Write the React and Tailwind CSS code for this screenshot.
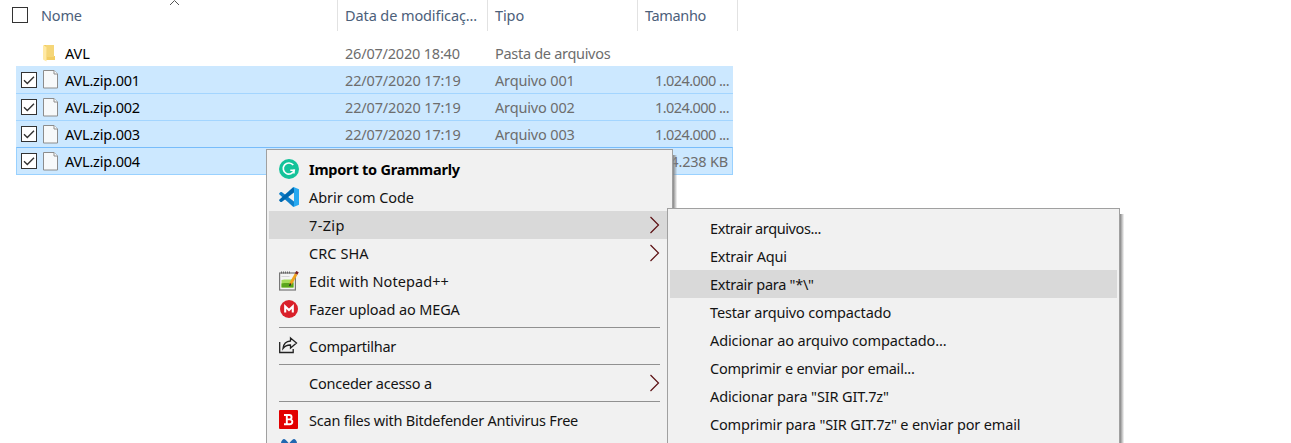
import React from "react";

const FILES = [
  ["AVL.zip.001", "22/07/2020 17:19", "Arquivo 001", "1.024.000 ..."],
  ["AVL.zip.002", "22/07/2020 17:19", "Arquivo 002", "1.024.000 ..."],
  ["AVL.zip.003", "22/07/2020 17:19", "Arquivo 003", "1.024.000 ..."],
  ["AVL.zip.004", "", "", "4.238 KB"],
];

const SUBMENU = [
  ["Extrair arquivos...", "tracking-[-0.4px]"],
  ["Extrair Aqui", "tracking-[-0.2px]"],
  ['Extrair para "*\\"', "tracking-[-0.26px]"],
  ["Testar arquivo compactado", "tracking-[-0.16px]"],
  ["Adicionar ao arquivo compactado...", "tracking-[-0.11px]"],
  ["Comprimir e enviar por email...", "tracking-[-0.23px]"],
  ['Adicionar para "SIR GIT.7z"', "tracking-[-0.12px]"],
  ['Comprimir para "SIR GIT.7z" e enviar por email', "tracking-[-0.16px]"],
];

function Checkbox({ checked }) {
  return (
    <svg className="block size-4 shrink-0" viewBox="0 0 16 16" fill="none">
      <rect x="0.5" y="0.5" width="15" height="15" fill="#fff" stroke="#333" />
      {checked && <path d="M3 8.2 6.3 11.4 13 4.8" stroke="#333" strokeWidth="1.4" />}
    </svg>
  );
}

function PageIcon() {
  return (
    <svg className="block h-[19px] w-[15px] shrink-0" viewBox="0 0 15 19">
      <path d="M.5.5h10.500l3.500 3.500v14H.5z" fill="#f7f9fa" stroke="#8c8c8c" />
      <path d="M11 .5v3.500h3.500" fill="#fff" stroke="#8c8c8c" />
    </svg>
  );
}

function FolderIcon() {
  return (
    <svg className="block h-[18px] w-[15px] shrink-0" viewBox="0 0 15 18">
      <path d="M1 1h10v11h1v4H3z" fill="#f3cd62" />
      <path d="M3 1h8v12H4z" fill="#f5d678" />
      <path d="M0 1l3.500 2v14.500L0 15.500z" fill="#ffe9a4" />
    </svg>
  );
}

function GrammarlyIcon() {
  return (
    <svg className="block size-5" viewBox="0 0 20 20" fill="none">
      <circle cx="10" cy="10" r="10" fill="#15c39a" />
      <path d="M14.300 6.100A5.600 5.600 0 1 0 15.200 11.300H11.300" stroke="#fff" strokeWidth="1.600" />
      <path d="M15 10.600v4" stroke="#fff" strokeWidth="1.500" />
    </svg>
  );
}

function CodeIcon() {
  return (
    <svg className="block size-5" viewBox="0 0 20 20">
      <path d="M.2 7.200V6.300L1.600 5.100h1.100L15 14.400V20l-1.200-.5z" fill="#0f7fc9" />
      <path d="M.2 12.800v.9l1.400 1.200h1.100L15 5.600V0l-1.200.5z" fill="#0068b0" />
      <path d="M14.600 0 20 2.200v15.600L14.600 20l-.8-.5 1.200-1V1.500l-1.200-1z" fill="#27a9f1" />
    </svg>
  );
}

function NotepadIcon() {
  return (
    <svg className="block size-5" viewBox="0 0 20 20">
      <rect x="0.600" y="2" width="15.800" height="17" fill="#f4f4f4" stroke="#777" strokeWidth="1.200" />
      <path d="M2.500 9c4-1 7 0 12-1v8.500h-12z" fill="#a5dc5a" />
      <path d="M2.500 12.500c4-1 8 0 12-1v5h-12z" fill="#5aa51c" />
      <path d="M2 1.500h10" stroke="#666" strokeWidth="2" strokeDasharray="1 1" />
      <path d="M2.500 5.500h8" stroke="#d5d5d5" />
      <path d="M17.200 3 11.500 13" stroke="#f0a21c" strokeWidth="2.800" />
      <path d="M11.800 12.500 10.500 14.800" stroke="#333" strokeWidth="1.500" />
      <path d="M18.500.6 17.200 3" stroke="#7e2024" strokeWidth="2.800" />
    </svg>
  );
}

function MegaIcon() {
  return (
    <svg className="block size-5" viewBox="0 0 20 20" fill="none">
      <circle cx="10" cy="10" r="9" fill="#d9202a" />
      <path d="M6.200 13.500V7.500L10 11 13.800 7.500v6" stroke="#fff" strokeWidth="2.100" />
    </svg>
  );
}

function ShareIcon() {
  return (
    <svg className="block size-5" viewBox="0 0 20 20" fill="none" stroke="#222" strokeWidth="1.300">
      <path d="M.7 6v10.500h13.500V13" />
      <path d="M11.500 2 17.500 7l-6 5V9C8 8.800 6 10 4 12.500 4.500 8 7 5.200 11.500 5z" />
    </svg>
  );
}

function BitdefenderIcon() {
  return (
    <svg className="block size-5" viewBox="0 0 20 20" fill="none">
      <rect width="19" height="19" rx="1" fill="#e20000" />
      <path d="M5 5h5.300c3 0 3 4.400 0 4.400H7.800h2.900c3.600 0 3.400 4.900 0 4.900H5M7.800 5v9.300" stroke="#fff" strokeWidth="1.900" />
    </svg>
  );
}

function BlueIcon() {
  return (
    <svg className="block size-5" viewBox="0 0 20 20">
      <path d="M2 5C2 3 4 1 5 1s2.500 1.500 5 4.500C12.500 2.500 14 1 15 1s3 2 3 4l-5.500 6 5.500 6-3 3-5-5-5 5-3-3 5.500-6z" fill="#2067b0" />
    </svg>
  );
}

function Arrow() {
  return (
    <svg className="mr-2.5 ml-auto block h-[18px] w-[11px] shrink-0" viewBox="0 0 11 18" fill="none">
      <path d="M1.500 1 9.500 9l-8 8" stroke="#5c0f12" strokeWidth="1.200" />
    </svg>
  );
}

function MenuItem({ icon, label, track, bold, active, arrow }) {
  return (
    <div className={`flex h-7 shrink-0 items-center pl-2.5 ${active ? "bg-[#d9d9d9]" : ""}`}>
      <div className="mr-2.5 size-5 shrink-0">{icon}</div>
      <span className={`${track} ${bold ? "font-bold text-black" : "text-[#141414]"}`}>{label}</span>
      {arrow && <Arrow />}
    </div>
  );
}

function Separator() {
  return (
    <div className="mr-2.5 ml-2.5 h-[9px] shrink-0 pt-1">
      <div className="h-px bg-[#919191]" />
    </div>
  );
}

function HeaderCell({ className, children }) {
  return <div className={`flex h-[31px] shrink-0 items-center border-r border-[#e2e2e2] ${className}`}>{children}</div>;
}

const ROW_STYLES = [
  "h-[27px] pl-[5px]",
  "h-[27px] border-t border-[#a3d5ff] pl-[5px]",
  "h-[27px] border-t border-[#a3d5ff] pl-[5px]",
  "h-[28px] border border-[#99d1ff] border-t-[#77bcfb] pl-1",
];

export default function App() {
  return (
    <div className="relative h-[443px] w-[1291px] overflow-hidden bg-white font-['Noto_Sans','Open_Sans',sans-serif] text-[14.5px] leading-5 whitespace-nowrap text-black">
      <div className="flex h-10 text-[#4c607a]">
        <HeaderCell className="w-[338px] pb-px pl-3">
          <Checkbox />
          <span className="ml-[13px] tracking-[-0.2px]">Nome</span>
        </HeaderCell>
        <HeaderCell className="w-[150px] pb-px pl-[7px]">
          <span className="tracking-[-0.1px]">Data de modificaç...</span>
        </HeaderCell>
        <HeaderCell className="w-[150px] pb-px pl-[7px]">
          <span className="tracking-[-0.1px]">Tipo</span>
        </HeaderCell>
        <HeaderCell className="w-[100px] pb-px pl-[7px]">
          <span className="tracking-[-0.35px]">Tamanho</span>
        </HeaderCell>
      </div>
      <svg className="absolute top-0 left-[169px] h-[6px] w-[11px]" viewBox="0 0 11 6" fill="none">
        <path d="M1 5 5.500.5 10 5" stroke="#555" />
      </svg>

      <div className="ml-4 w-[717px] text-[#6d6d6d]">
        <div className="flex h-[26px] items-center pl-[27px]">
          <FolderIcon />
          <span className="ml-[7px] w-[280px] tracking-[-0.1px] text-black">AVL</span>
          <span className="w-[150px] tracking-[-0.2px]">26/07/2020 18:40</span>
          <span className="tracking-[-0.3px]">Pasta de arquivos</span>
        </div>
        {FILES.map(([name, date, type, size], i) => (
          <div key={name} className={`flex items-center bg-[#cce8ff] ${ROW_STYLES[i]}`}>
            <Checkbox checked />
            <div className="ml-1.5">
              <PageIcon />
            </div>
            <span className="ml-[7px] w-[280px] tracking-[-0.2px] text-black">{name}</span>
            <span className="w-[150px] tracking-[-0.15px]">{date}</span>
            <span className="tracking-[-0.15px]">{type}</span>
            <span className={`ml-auto ${i === 3 ? "pr-1 tracking-[-0.2px]" : "pr-1 tracking-[-0.55px]"}`}>{size}</span>
          </div>
        ))}
      </div>

      <div className="absolute top-[149px] left-[266px] h-[320px] w-[407px]">
        <div className="absolute top-[6px] left-full h-full w-1 bg-linear-to-r from-[#858585] to-[#85858510]" />
        <div className="relative flex h-full flex-col border border-[#a0a0a0] bg-[#f1f1f1] px-0.5 pt-[5px]">
          <MenuItem icon={<GrammarlyIcon />} label="Import to Grammarly" bold track="tracking-[-0.22px]" />
          <MenuItem icon={<CodeIcon />} label="Abrir com Code" track="tracking-[-0.06px]" />
          <MenuItem label="7-Zip" active arrow track="tracking-[0.35px]" />
          <MenuItem label="CRC SHA" arrow track="tracking-[0.08px]" />
          <MenuItem icon={<NotepadIcon />} label="Edit with Notepad++" track="tracking-[0.07px]" />
          <MenuItem icon={<MegaIcon />} label="Fazer upload ao MEGA" track="tracking-[-0.13px]" />
          <Separator />
          <MenuItem icon={<ShareIcon />} label="Compartilhar" track="tracking-[-0.28px]" />
          <Separator />
          <MenuItem label="Conceder acesso a" arrow track="tracking-[-0.23px]" />
          <Separator />
          <MenuItem icon={<BitdefenderIcon />} label="Scan files with Bitdefender Antivirus Free" track="tracking-[-0.22px]" />
          <MenuItem icon={<BlueIcon />} />
        </div>
      </div>

      <div className="absolute top-[208px] left-[667px] h-[260px] w-[453px]">
        <div className="absolute top-[6px] left-full h-full w-1 bg-linear-to-r from-[#858585] to-[#85858510]" />
        <div className="relative h-full border border-[#a0a0a0] bg-[#f1f1f1] px-0.5 pt-[5px]">
          {SUBMENU.map(([label, track], i) => (
            <MenuItem key={label} label={label} track={track} active={i === 2} />
          ))}
        </div>
      </div>
    </div>
  );
}
